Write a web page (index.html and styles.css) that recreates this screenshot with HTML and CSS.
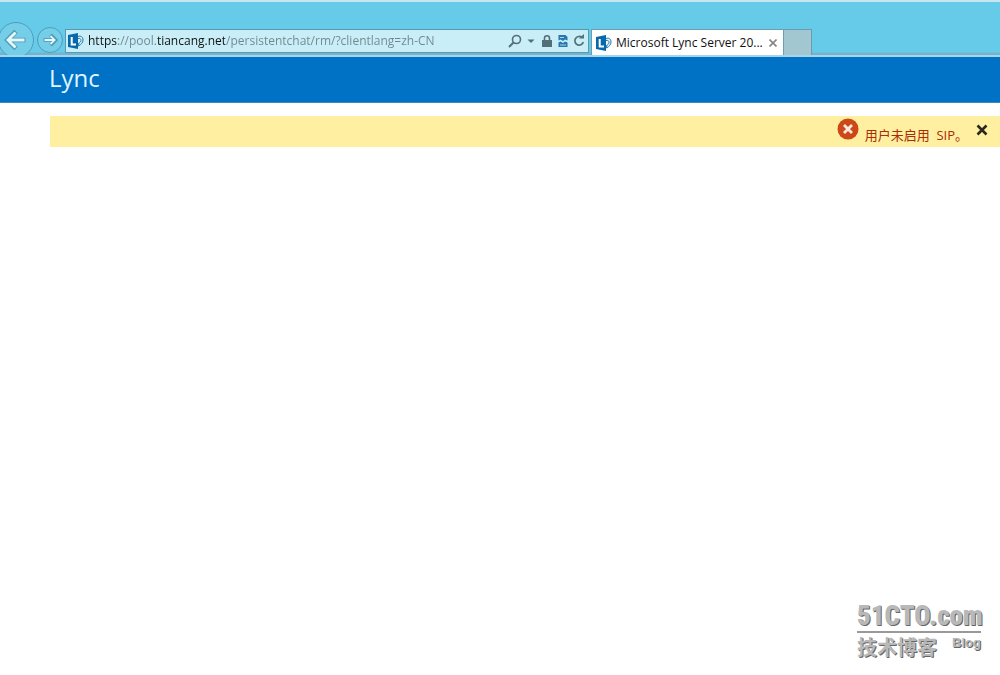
FILE: index.html
```html
<!DOCTYPE html>
<html lang="zh-CN">
<head>
<meta charset="utf-8">
<title>Microsoft Lync Server 2013</title>
<link rel="stylesheet" href="styles.css">
</head>
<body>
<svg class="defs" width="0" height="0" aria-hidden="true">
  <symbol id="lync" viewBox="0 0 16 16">
    <path d="M10 3.500c3-1.200 5 .7 5 3.500 0 2.600-1.800 4.500-4.500 6l.3-3" fill="#d9f3fa" stroke="#2879ac" stroke-width="1"/>
    <path d="M10 5.500c2-.5 3 .5 3 1.800 0 1.500-1 2.300-2.400 3" fill="none" stroke="#2879ac" stroke-width="1"/>
    <path d="M0 2 10 0v16L0 14z" fill="#0869aa"/>
    <path d="M3.700 4v7.500H8" fill="none" stroke="#fff" stroke-width="2"/>
  </symbol>
</svg>
<header class="chrome">
  <nav class="history" aria-label="历史记录">
    <button class="round back" aria-label="后退"><svg viewBox="0 0 36 36"><path d="M28 18H8M18 9l-9 9 9 9" fill="none" stroke="#5095b2" stroke-width="5"/><path d="M27 18H9M17.500 10 9.500 18l8 8" fill="none" stroke="#e1f8fc" stroke-width="3"/></svg></button>
    <button class="round forward" aria-label="前进"><svg viewBox="0 0 26 26"><path d="M6 13h13M13.500 7.500l5.500 5.500-5.500 5.500" fill="none" stroke="#5095b2" stroke-width="4"/><path d="M7 13h11M13.500 8.500 18 13l-4.500 4.500" fill="none" stroke="#e1f8fc" stroke-width="2"/></svg></button>
  </nav>
  <div class="address">
    <svg class="favicon" aria-hidden="true"><use href="#lync"/></svg>
    <input class="url" type="text" aria-label="地址" value="https://pool.tiancang.net/persistentchat/rm/?clientlang=zh-CN">
    <button class="tool search" aria-label="搜索"><svg viewBox="0 0 14 14"><circle cx="8.500" cy="5.500" r="4" fill="none" stroke="#536f78" stroke-width="1.600"/><path d="M5.500 8.500 1 13" stroke="#536f78" stroke-width="2"/></svg></button>
    <button class="tool drop" aria-label="下拉"><svg viewBox="0 0 14 14"><path d="M3.500 5.500h7L7 9z" fill="#536f78"/></svg></button>
    <button class="tool" aria-label="安全报告"><svg viewBox="0 0 14 14"><path d="M4.500 7V4.200a2.500 2.500 0 0 1 5 0V7" fill="none" stroke="#536f78" stroke-width="1.600"/><path d="M2 6h10v7H2z" fill="#536f78"/></svg></button>
    <button class="tool" aria-label="兼容性视图"><svg viewBox="0 0 14 14"><path d="M2.500 1h7l2 2v3.500L9 5.500 7 7 4.500 5.500l-2 1zM2.500 8.500l2-1L7 9l2-1.500 2.500 1V13h-9z" fill="#2677b2"/><path d="M4 3.500h4M4 11h6" stroke="#a7d8ea"/></svg></button>
    <button class="tool" aria-label="刷新"><svg viewBox="0 0 14 14"><path d="M10 3.500A4.300 4.300 0 1 0 11.300 8" fill="none" stroke="#536f78" stroke-width="1.700"/><path d="M7 4.500h5V0z" fill="#536f78"/></svg></button>
  </div>
  <div class="tab">
    <svg class="favicon" aria-hidden="true"><use href="#lync"/></svg>
    <span class="tab-title">Microsoft Lync Server 20...</span>
    <button class="tab-close" aria-label="关闭标签页"><svg viewBox="0 0 8 8"><path d="m.5.5 7 7m0-7-7 7" stroke="#858585" stroke-width="1.600"/></svg></button>
  </div>
  <button class="new-tab" aria-label="新建标签页"></button>
</header>
<div class="brand"><h1 class="logo">Lync</h1></div>
<main class="content">
  <div class="alert" role="alert">
    <svg class="error" viewBox="0 0 22 22" aria-hidden="true"><circle cx="11" cy="11" r="10.500" fill="#cc4818"/><path d="m7 7 8 8m0-8-8 8" stroke="#ffe9dc" stroke-width="2.800"/></svg>
    <span class="message">用户未启用&nbsp; SIP。</span>
    <button class="dismiss" aria-label="关闭"><svg viewBox="0 0 12 12"><path d="m1.500 1.500 9 9m0-9-9 9" stroke="#29281e" stroke-width="2.600"/></svg></button>
  </div>
</main>
<footer class="watermark">
  <div class="site">51CTO.com</div>
  <div class="caption"><span class="zh">技术博客</span><span class="blog">Blog</span></div>
</footer>
</body>
</html>
```
FILE: styles.css
```css
* { box-sizing: border-box; }
body {
  margin: 0;
  min-height: 100vh;
  display: flex;
  flex-direction: column;
  background: #fff;
  font-family: "Open Sans", "Noto Sans CJK SC", sans-serif;
}
button { padding: 0; border: 0; background: none; display: grid; place-items: center; flex: none; }
.defs { position: absolute; }
.chrome {
  display: flex;
  align-items: flex-end;
  height: 57px;
  border-top: 2px solid #c8e6ef;
  border-bottom: 2px solid #a5d5e9;
  background: linear-gradient(transparent 50px, #74b4cd 51px), #65cbe9;
  overflow: hidden;
}
.history { display: flex; align-items: center; gap: 3px; width: 65px; height: 36px; margin-bottom: -3px; }
.round { border: 1px solid #4d9dbd; border-radius: 50%; background: #75cee8; }
.round svg { width: 100%; height: 100%; }
.back { width: 36px; height: 36px; margin-left: -2px; }
.forward { width: 26px; height: 26px; }
.address {
  display: flex;
  align-items: center;
  flex: 0 1 524px;
  min-width: 0;
  height: 24px;
  margin-bottom: 2px;
  padding: 0 1px 0 2px;
  border: 1px solid #5799af;
  background: #c9eef7;
}
.favicon { width: 16px; height: 16px; flex: none; }
.url {
  flex: 1;
  min-width: 0;
  padding: 0;
  margin-left: 4px;
  border: 0;
  outline: 0;
  font: 12px/20px "Open Sans", sans-serif;
  color: transparent;
  background: linear-gradient(90deg, #111 29px, #71868e 29px 69px, #111 69px 137px, #71868e 137px);
  -webkit-background-clip: text;
  background-clip: text;
}
.tool { width: 16px; height: 20px; }
.tool svg { width: 14px; height: 14px; }
.tab {
  display: flex;
  align-items: center;
  flex: 0 1 193px;
  height: 26px;
  margin-left: 2px;
  padding: 0 6px 0 4px;
  border: 1px solid #6b9fb2;
  border-bottom: 0;
  background: #fff;
}
.tab-title { flex: 1; margin-left: 4px; font-size: 12px; line-height: 20px; white-space: nowrap; color: #111; }
.tab-close, .tab-close svg { width: 8px; height: 8px; }
.new-tab { width: 28px; height: 26px; border: 1px solid #6c9baf; border-width: 1px 1px 0 0; background: #a2c7d1; }
.brand { height: 46px; padding-left: 49px; background: #0072c6; border-bottom: 1px solid #3b88c0; }
.logo { margin: 0; font-size: 24px; line-height: 42px; font-weight: 400; color: #def6ff; font-family: "Open Sans", sans-serif; }
.content { flex: 1; padding: 13px 0 0 50px; }
.alert { display: flex; align-items: center; justify-content: flex-end; height: 31px; padding-right: 12px; background: #fef0a0; }
.error { width: 22px; height: 22px; margin-bottom: 6px; }
.message { margin: 6px 8px 0 6px; font-size: 13px; line-height: 24px; color: #a72d08; }
.dismiss, .dismiss svg { width: 12px; height: 12px; }
.dismiss { margin-bottom: 3px; }
.watermark {
  align-self: flex-end;
  width: 124px;
  margin: 0 19px 14px 0;
  color: #b8b8b8;
  text-shadow: 1px 1px 0 #666;
}
.site { font: 900 27px/30px "Roboto Condensed", Roboto, sans-serif; border-bottom: 2px solid #999; white-space: nowrap; }
.caption { display: flex; justify-content: space-between; align-items: flex-start; }
.zh { font: 700 20px/28px "Noto Sans CJK SC", sans-serif; }
.blog { font: 700 13px/20px "Liberation Sans", sans-serif; }
```
